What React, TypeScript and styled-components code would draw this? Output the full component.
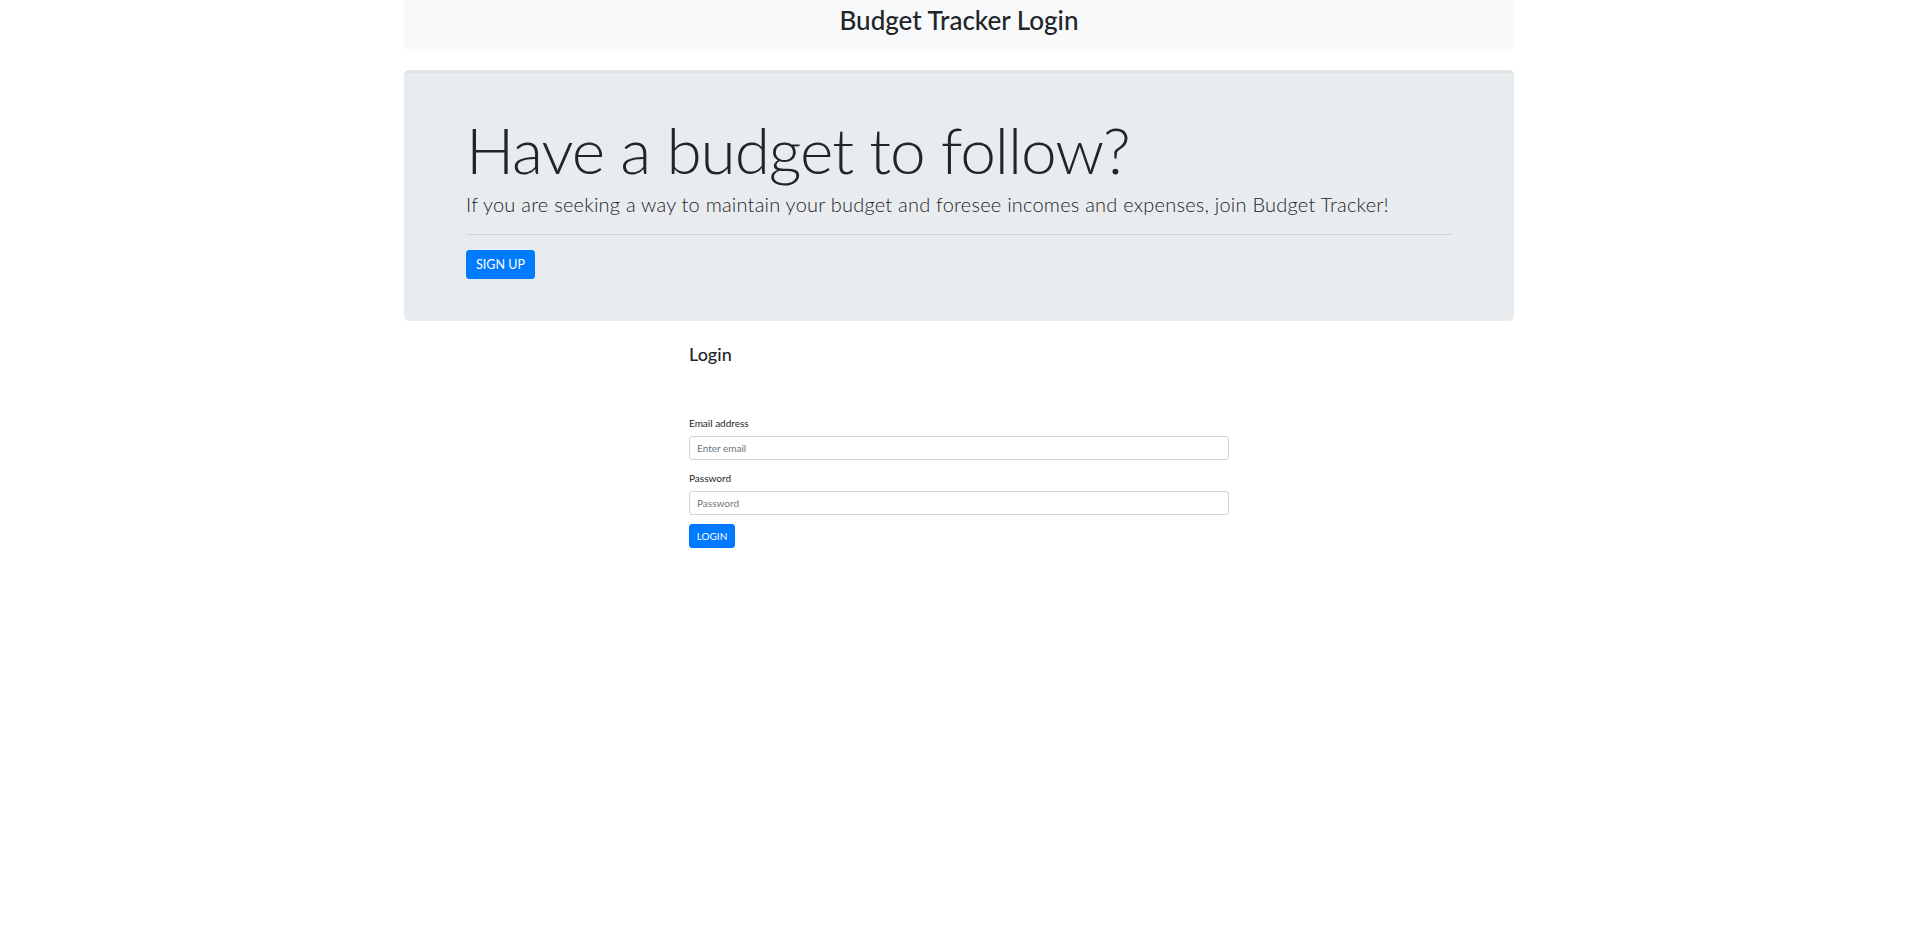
import React from "react";
import styled, { createGlobalStyle } from "styled-components";

const GlobalStyle = createGlobalStyle`
  html, body {
    margin: 0;
    padding: 0;
    background: #ffffff;
  }
  body {
    font-family: Lato, "Open Sans", "Liberation Sans", sans-serif;
    color: #212529;
  }
  * { box-sizing: border-box; }
`;

const Page = styled.div`
  width: 1110px;
  margin: 0 auto;
  display: flex;
  flex-direction: column;
`;

const Header = styled.header`
  height: 49px;
  padding-bottom: 8px;
  background: #f8f9fa;
  display: flex;
  align-items: center;
  justify-content: center;
`;

const SiteTitle = styled.h1`
  margin: 0;
  font-size: 26px;
  font-weight: 500;
  line-height: 1.2;
  color: #212529;
`;

const Jumbotron = styled.section`
  margin-top: 21px;
  background: #e9ecef;
  border-radius: 5px;
  padding: 42px 62px 42px;
  box-shadow: inset 0 3px 0 rgba(0, 0, 0, 0.035);
  display: flex;
  flex-direction: column;
  align-items: flex-start;
`;

const Display = styled.h2`
  margin: 0;
  font-size: 64px;
  font-weight: 300;
  line-height: 1.2;
  letter-spacing: -1.1px;
  color: #212529;
`;

const Lead = styled.p`
  margin: 0;
  font-size: 20px;
  font-weight: 300;
  line-height: 30px;
  letter-spacing: 0.22px;
  color: #212529;
`;

const Rule = styled.hr`
  align-self: stretch;
  margin: 15px 0 15px;
  border: 0;
  border-top: 1px solid rgba(0, 0, 0, 0.1);
  height: 0;
`;

const PrimaryButton = styled.button<{ $size: "md" | "sm" }>`
  background: #007bff;
  color: #ffffff;
  border: 1px solid #007bff;
  border-radius: 3px;
  font-family: inherit;
  font-weight: 400;
  text-transform: uppercase;
  cursor: pointer;
  display: inline-flex;
  align-items: center;
  justify-content: center;
  padding: 0;
  width: ${(p) => (p.$size === "md" ? "69px" : "46px")};
  height: ${(p) => (p.$size === "md" ? "29px" : "24px")};
  font-size: ${(p) => (p.$size === "md" ? "12.5px" : "10px")};
`;

const LoginSection = styled.section`
  width: 540px;
  margin: 23px auto 0;
  display: flex;
  flex-direction: column;
  align-items: flex-start;
`;

const SectionTitle = styled.h3`
  margin: 0 0 51px;
  font-size: 18px;
  font-weight: 500;
  line-height: 1.2;
  color: #212529;
`;

const Form = styled.form`
  align-self: stretch;
  display: flex;
  flex-direction: column;
  align-items: flex-start;
`;

const Field = styled.div`
  align-self: stretch;
  display: flex;
  flex-direction: column;
  margin-bottom: 11px;
  &:last-of-type {
    margin-bottom: 9px;
  }
`;

const Label = styled.label`
  font-size: 10px;
  font-weight: 400;
  line-height: 15px;
  margin-bottom: 5px;
  color: #212529;
`;

const Input = styled.input`
  height: 24px;
  width: 100%;
  padding: 0 7px;
  border: 1px solid #ced4da;
  border-radius: 3px;
  font-family: inherit;
  font-size: 10px;
  color: #495057;
  background: #fff;
  &::placeholder {
    color: #6c757d;
  }
`;

export default function App() {
  return (
    <>
      <GlobalStyle />
      <Page>
        <Header>
          <SiteTitle>Budget Tracker Login</SiteTitle>
        </Header>
        <Jumbotron>
          <Display>Have a budget to follow?</Display>
          <Lead>
            If you are seeking a way to maintain your budget and foresee incomes and expenses, join Budget Tracker!
          </Lead>
          <Rule />
          <PrimaryButton $size="md" type="button">Sign up</PrimaryButton>
        </Jumbotron>
        <LoginSection>
          <SectionTitle>Login</SectionTitle>
          <Form onSubmit={(e) => e.preventDefault()}>
            <Field>
              <Label htmlFor="email">Email address</Label>
              <Input id="email" type="email" placeholder="Enter email" />
            </Field>
            <Field>
              <Label htmlFor="password">Password</Label>
              <Input id="password" type="password" placeholder="Password" />
            </Field>
            <PrimaryButton $size="sm" type="submit">Login</PrimaryButton>
          </Form>
        </LoginSection>
      </Page>
    </>
  );
}
